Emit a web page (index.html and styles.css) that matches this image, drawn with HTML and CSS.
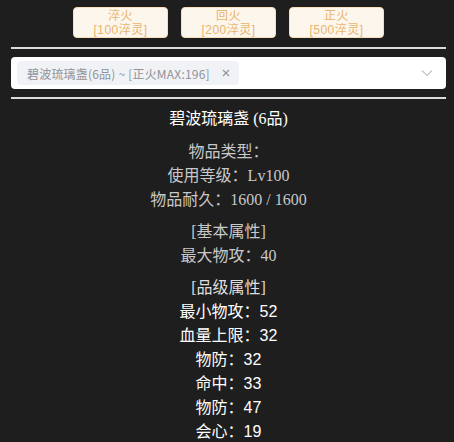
FILE: index.html
```html
<!DOCTYPE html>
<html lang="zh-CN">
<head>
<meta charset="utf-8">
<link rel="stylesheet" href="styles.css">
</head>
<body>
<div class="page">
  <div class="btns">
    <button class="btn"><span class="bl">淬火</span><span class="bl">[100淬灵]</span></button>
    <button class="btn"><span class="bl">回火</span><span class="bl">[200淬灵]</span></button>
    <button class="btn"><span class="bl">正火</span><span class="bl">[500淬灵]</span></button>
  </div>
  <div class="rule"></div>
  <div class="select">
    <span class="tag"><span class="tag-text">碧波琉璃盏(6品) ~ [正火MAX:196]</span>
      <svg class="tag-x" width="8" height="8" viewBox="0 0 8 8"><path d="M1 1L7 7M7 1L1 7" stroke="#909399" stroke-width="1.1" fill="none"/></svg>
    </span>
    <svg class="arrow" width="12" height="8" viewBox="0 0 12 8"><path d="M1 1.5L6 6.5L11 1.5" stroke="#c0c4cc" stroke-width="1.2" fill="none"/></svg>
  </div>
  <div class="rule"></div>
  <div class="info">
    <div class="title">碧波琉璃盏 (6品)</div>
    <div class="group gray">
      <div>物品类型：</div>
      <div>使用等级：Lv100</div>
      <div>物品耐久：1600 / 1600</div>
    </div>
    <div class="group gray">
      <div>[基本属性]</div>
      <div>最大物攻：40</div>
    </div>
    <div class="group white">
      <div class="head">[品级属性]</div>
      <div>最小物攻：52</div>
      <div>血量上限：32</div>
      <div>物防：32</div>
      <div>命中：33</div>
      <div>物防：47</div>
      <div>会心：19</div>
    </div>
  </div>
</div>
</body>
</html>
```

FILE: styles.css
```css
html, body {
  margin: 0;
  padding: 0;
  background: #1e1e1e;
}
.page {
  padding: 7px 8px 0 11px;
  font-family: "Liberation Serif", "Noto Sans CJK SC", serif;
}
.btns {
  display: flex;
  justify-content: center;
  gap: 13px;
}
.btn {
  width: 95px;
  height: 31px;
  box-sizing: border-box;
  background: #fdf6ec;
  border: 1px solid #f7dfbb;
  border-radius: 4px;
  color: #e9b46c;
  font-family: "Liberation Sans", "Noto Sans CJK SC", sans-serif;
  font-size: 12px;
  padding: 1px 0 0;
  display: flex;
  flex-direction: column;
  align-items: center;
  justify-content: center;
}
.bl {
  display: block;
  line-height: 14px;
  height: 14px;
  letter-spacing: 0.5px;
}
.rule {
  height: 2px;
  background: #dcdcdc;
  margin: 9px 0 8px;
}
.select + .rule {
  margin: 8px 0 8px;
}
.select {
  height: 32px;
  box-sizing: border-box;
  background: #fff;
  border-radius: 4px;
  display: flex;
  align-items: center;
  padding: 0 13px 0 6px;
}
.tag {
  height: 24px;
  box-sizing: border-box;
  background: #f0f2f5;
  border-radius: 4px;
  color: #909399;
  font-family: "Noto Sans CJK SC", sans-serif;
  font-size: 12px;
  display: flex;
  align-items: center;
  padding: 0 9px 0 10px;
  gap: 12px;
}
.tag-text {
  letter-spacing: 0.2px;
}
.arrow {
  margin-left: auto;
}
.info {
  text-align: center;
  font-size: 16px;
  line-height: 24px;
}
.title {
  color: #fff;
}
.group {
  margin-top: 8px;
}
.title + .group {
  margin-top: 9px;
}
.group + .group {
  margin-top: 8px;
}
.gray {
  color: #c8c8c8;
}
.white {
  color: #fff;
  font-family: "Liberation Sans", "Noto Sans CJK SC", sans-serif;
}
.white .head {
  color: #dedede;
  font-family: "Liberation Serif", "Noto Sans CJK SC", serif;
}
```
